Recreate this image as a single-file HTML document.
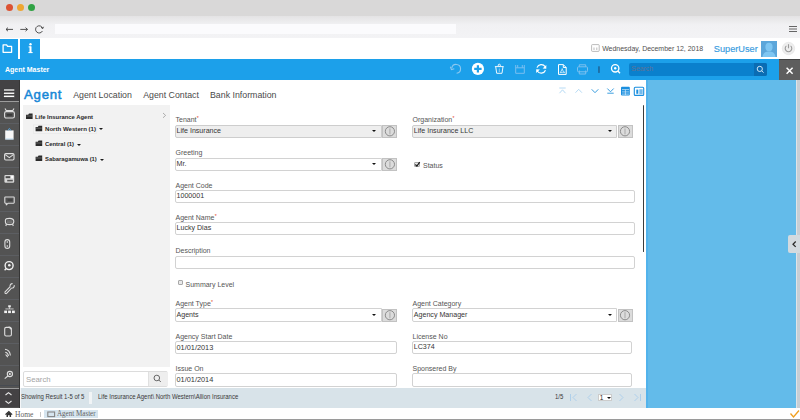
<!DOCTYPE html>
<html><head><meta charset="utf-8"><style>
*{margin:0;padding:0;box-sizing:border-box}
html,body{width:800px;height:420px;overflow:hidden;background:#fff;font-family:"Liberation Sans",sans-serif;position:relative}
.a{position:absolute}
.t{position:absolute;white-space:nowrap;line-height:1}
svg{position:absolute;overflow:visible}
.lbl{font-size:7px;color:#555555}
.val{font-size:7.1px;color:#363636}
.inp{position:absolute;border:1px solid #d2d2d2;border-radius:2px;background:#fff}
.dis{background:#eeeeee;border-color:#cdcdcd}
.ib{position:absolute;width:15px;background:#dcdcdc;border:1px solid #c2c2c2}
.req{color:#e2401c;font-size:5px;position:relative;top:-2.3px;margin-left:0.3px}
.caret{position:absolute;width:0;height:0;border-left:2px solid transparent;border-right:2px solid transparent;border-top:2.6px solid #111}
.cb{position:absolute;width:5.4px;height:5.5px;border:0.8px solid #a8a8a8;border-radius:1px;background:#e9e9e9}
.tree{font-size:6.3px;font-weight:bold;color:#262626}
</style></head><body>
<div class="a" style="left:0px;top:0px;width:800px;height:15.5px;background:#d9d8d8;"></div>
<div class="a" style="left:0px;top:15.5px;width:800px;height:22.5px;background:#f1f1f4;background:linear-gradient(#e4e3e4,#f1f1f3 40%,#f3f3f5)"></div>
<div class="a" style="left:55px;top:24px;width:401px;height:10px;background:#fbfbfd;"></div>
<div class="a" style="left:5.5px;top:3.5px;width:7px;height:7px;border-radius:50%;background:#dc5232"></div>
<div class="a" style="left:16.5px;top:3.5px;width:7px;height:7px;border-radius:50%;background:#eea632"></div>
<div class="a" style="left:27.5px;top:3.5px;width:7px;height:7px;border-radius:50%;background:#30a244"></div>
<svg style="left:0;top:0" width="800" height="40"><g stroke="#404040" stroke-width="0.9" fill="none"><path d="M6 29.4 H13 M6 29.4 L8 27.6 M6 29.4 L8 31.2"/><path d="M20.3 29.4 H27.5 M27.5 29.4 L25.5 27.6 M27.5 29.4 L25.5 31.2"/><path d="M42.6 28.3 A3.6 3.6 0 1 0 42.4 31"/><path d="M41 27.3 L42.7 28.6 L43.5 26.8"/></g><g stroke="#555" stroke-width="0.9"><path d="M789 26.5H797 M789 29H797 M789 31.5H797"/></g></svg>
<div class="a" style="left:0px;top:39px;width:17.7px;height:20.5px;background:#1ca0eb;"></div>
<div class="a" style="left:20px;top:39px;width:20px;height:20.5px;background:#1ca0eb;"></div>
<svg style="left:0;top:0" width="60" height="60"><g fill="none" stroke="#fff" stroke-width="1.3"><path d="M3.1 44.8 H6.6 L7.6 46.4 H11.6 V52.3 H3.1 Z" stroke-linejoin="round"/></g><g fill="#fff"><rect x="29.5" y="46.4" width="2" height="6.4"/><rect x="28.4" y="52" width="4.2" height="1.1"/><rect x="28.6" y="46.4" width="2.5" height="1"/><circle cx="30.5" cy="44.3" r="1.2"/></g></svg>
<svg style="left:0;top:0" width="800" height="60"><g fill="none" stroke="#aaa" stroke-width="0.8"><rect x="591.6" y="44.6" width="7.6" height="6.8" rx="0.8"/><path d="M594 47.5 V50 M596.8 47.5 V50"/></g></svg>
<div class="t" style="left:602.2px;top:46.11px;font-size:6.96px;color:#505050;font-weight:normal;">Wednesday, December 12, 2018</div>
<div class="t" style="left:713.8px;top:45.01px;font-size:9.2px;color:#379be0;font-weight:normal;-webkit-text-stroke:0.15px #379be0">SuperUser</div>
<div class="a" style="left:761px;top:41.3px;width:16px;height:15.7px;background:#5ba6da;"></div>
<svg style="left:0;top:0" width="800" height="60"><g fill="#7ec6f2"><ellipse cx="769" cy="47" rx="3.6" ry="4.2"/><path d="M762.5 57 C763 52.5 766 51.5 769 51.5 C772 51.5 775 52.5 775.5 57 Z"/></g><circle cx="788.5" cy="48.5" r="6.2" fill="#eeeeee" stroke="#e2e2e2" stroke-width="0.6"/><g fill="none" stroke="#9a9a9a" stroke-width="1.1"><path d="M786.4 45.9 A3.3 3.3 0 1 0 790.6 45.9"/><path d="M788.5 44.2 V48.3"/></g></svg>
<div class="a" style="left:0px;top:59.4px;width:800px;height:20.6px;background:#1ca0ea;"></div>
<div class="t" style="left:5px;top:65.77px;font-size:7px;color:#ffffff;font-weight:bold;">Agent Master</div>
<svg style="left:0;top:0" width="800" height="82"><g fill="none" stroke="#8cc8f0" stroke-width="1.1"><path d="M451.8 68.2 A4.4 4.4 0 1 1 456.6 73.2"/><path d="M450.3 66.8 L451.5 69.6 L454.3 68.8"/></g><circle cx="477.9" cy="68.9" r="6.1" fill="#fff"/><path d="M474.2 68.9 H481.6 M477.9 65.2 V72.6" stroke="#1ca0ea" stroke-width="2.2"/><g fill="none" stroke="#eef7fd" stroke-width="1"><path d="M494.9 66.6 H503.6"/><circle cx="499.3" cy="65.3" r="1.1"/><path d="M495.7 66.6 L496.7 73.3 H502 L503 66.6"/><path d="M499.3 68.5 V72" stroke="#8fcdf3"/></g><g fill="none" stroke="#79bff0" stroke-width="1"><path d="M515.7 65 V73.3 H524.3 V65"/><path d="M515.7 67.8 H524.3 M517.7 65 V67.8 M522.3 65 V67.8"/></g><g fill="none" stroke="#fff" stroke-width="1.2"><path d="M537 67.6 A4.6 4.6 0 0 1 545.2 66.8"/><path d="M545.5 70.3 A4.6 4.6 0 0 1 537.3 71"/></g><path d="M546.3 64.9 L546.3 68.7 L542.6 68.5 Z M536.2 73 L536.2 69.2 L539.9 69.4 Z" fill="#fff"/><g fill="none" stroke="#fff" stroke-width="1"><path d="M558.5 64.6 H563.3 L566.2 67.5 V74.4 H558.5 Z"/><path d="M563.3 64.6 V67.5 H566.2"/><path d="M560.2 72.6 C561.5 70.5 562.3 69 562.2 68.6 C562.6 70.4 563.3 71.6 564.7 72.4 C563 72.1 561.5 72.3 560.2 72.6 Z" stroke-width="0.7"/></g><g fill="none" stroke="#7cc0ef" stroke-width="1"><rect x="577.5" y="66.8" width="10" height="5" rx="1"/><path d="M579.3 66.8 V64.8 H585.7 V66.8 M579.3 70.5 V74 H585.7 V70.5"/></g><rect x="598" y="66.3" width="1.9" height="6.6" fill="#1d6ea6"/><g fill="none" stroke="#fff" stroke-width="1.3"><circle cx="615.2" cy="68.3" r="3.7"/><path d="M617.9 71 L620 73.2"/></g><circle cx="615.2" cy="68.3" r="1.2" fill="#fff"/></svg>
<div class="a" style="left:629px;top:62.8px;width:138px;height:12.8px;background:#0a80cd;border-radius:2px"></div>
<div class="t" style="left:631.3px;top:65.76px;font-size:6.9px;color:#5f7396;font-weight:normal;">Search</div>
<div class="a" style="left:753.8px;top:62.8px;width:13.2px;height:12.8px;background:#0a6cb3;border-radius:0 2px 2px 0"></div>
<svg style="left:0;top:0" width="800" height="82"><g fill="none" stroke="#cfe6f7" stroke-width="1"><circle cx="759.8" cy="68.9" r="2.6"/><path d="M761.7 70.8 L763.6 72.6"/></g></svg>
<div class="a" style="left:779px;top:59.4px;width:21px;height:20.6px;background:#5e5e5e;"></div>
<div class="a" style="left:779px;top:59.4px;width:21px;height:1px;background:#444;"></div>
<svg style="left:0;top:0" width="800" height="82"><path d="M786.6 67.7 L792.6 73.7 M792.6 67.7 L786.6 73.7" stroke="#fff" stroke-width="1.5"/></svg>
<div class="a" style="left:0px;top:80px;width:20px;height:328px;background:#535353;"></div>
<div class="a" style="left:19.3px;top:80px;width:1px;height:328px;background:#353535;"></div>
<div class="a" style="left:0px;top:80px;width:19.3px;height:21px;background:#434244;"></div>
<div class="a" style="left:0px;top:100.8px;width:19.3px;height:1.1px;background:#9c9c9c;"></div>
<div class="a" style="left:0px;top:123px;width:19.3px;height:1px;background:#5c5e62;"></div>
<div class="a" style="left:0px;top:145px;width:19.3px;height:1px;background:#5c5e62;"></div>
<div class="a" style="left:0px;top:167px;width:19.3px;height:1px;background:#5c5e62;"></div>
<div class="a" style="left:0px;top:189px;width:19.3px;height:1px;background:#5c5e62;"></div>
<div class="a" style="left:0px;top:211px;width:19.3px;height:1px;background:#5c5e62;"></div>
<div class="a" style="left:0px;top:233px;width:19.3px;height:1px;background:#5c5e62;"></div>
<div class="a" style="left:0px;top:255px;width:19.3px;height:1px;background:#5c5e62;"></div>
<div class="a" style="left:0px;top:277px;width:19.3px;height:1px;background:#5c5e62;"></div>
<div class="a" style="left:0px;top:299px;width:19.3px;height:1px;background:#5c5e62;"></div>
<div class="a" style="left:0px;top:321px;width:19.3px;height:1px;background:#5c5e62;"></div>
<div class="a" style="left:0px;top:343px;width:19.3px;height:1px;background:#5c5e62;"></div>
<div class="a" style="left:0px;top:365px;width:19.3px;height:1px;background:#5c5e62;"></div>
<div class="a" style="left:0px;top:384.5px;width:19.3px;height:0.8px;background:#474b52;"></div>
<div class="a" style="left:0px;top:387.9px;width:19.3px;height:1px;background:#9a9a9a;"></div>
<div class="a" style="left:0px;top:388.9px;width:19.3px;height:18px;background:#444244;"></div>
<svg style="left:0;top:0" width="20" height="420"><g fill="#fff" stroke="#222" stroke-width="0.3"><rect x="3.8" y="89.1" width="10.6" height="1.8"/><rect x="3.8" y="92.3" width="10.6" height="1.8"/><rect x="3.8" y="95.4" width="10.6" height="1.8"/></g><g fill="none" stroke="#dedede" stroke-width="1.1" stroke-linejoin="round"><rect x="4.6" y="111.6" width="9.8" height="6.4" rx="1.6"/><path d="M5 108.4 L6.2 110.6 H12.8 L14 108.4"/><rect x="4.6" y="153.6" width="9.4" height="6.4" rx="1.2"/><path d="M5.2 154.6 L9.3 157.6 L13.4 154.6"/><path d="M5.4 197 H13.6 Q14.2 197 14.2 197.6 V202.6 Q14.2 203.2 13.6 203.2 H8.2 L6.3 204.8 V203.2 H5.4 Q4.8 203.2 4.8 202.6 V197.6 Q4.8 197 5.4 197 Z"/><path d="M5.4 220.3 Q5.4 218.4 9.6 218.4 Q13.8 218.4 13.8 221.5 Q13.8 224.6 9.6 224.6 Q5.4 224.6 5.4 222 Z"/><path d="M6.5 224 L5.8 226 M12.5 224 L13.3 226"/><rect x="4.9" y="239.6" width="4.8" height="8.8" rx="2.4"/><circle cx="9.1" cy="265.6" r="4" stroke="#f0f0f0" stroke-width="1.4"/><path d="M6.3 268.6 L4.6 270.2" stroke="#f0f0f0" stroke-width="1.4"/><path d="M4.8 292.2 L10.2 286.6 M6.4 293.6 L11.6 288 M4.8 292.2 Q4.8 293.6 6.4 293.6" /><path d="M10.2 286.6 A2.3 2.3 0 0 1 12.6 283.6 M11.6 288 A2.3 2.3 0 0 0 14.2 285.2"/><path d="M4.7 328.8 Q4.7 327.4 6.2 327.4 H9.3 L11.4 329.5 V334.6 Q11.4 336 10 336 H6.2 Q4.7 336 4.7 334.6 Z"/><path d="M8.5 327.2 A2.4 2.4 0 0 1 11.6 329.2"/><path d="M5 349.3 Q9.8 350 10.4 355.5 M5.3 352.3 Q8.2 353 8.4 356 M5.6 354.5 L7.8 357.2"/><circle cx="9.9" cy="374" r="2.6"/><path d="M7.9 376 L4.7 378.6"/><path d="M5.5 395 L8.5 392.6 L11.5 395 M5.5 401 L8.5 403.4 L11.5 401" stroke="#e8e8e8"/></g><g fill="#eeeeee"><circle cx="7.3" cy="242" r="0.8"/><circle cx="7.3" cy="246" r="0.8"/><circle cx="9.3" cy="265.3" r="1.3"/><circle cx="9.9" cy="374" r="1"/></g><rect x="6.8" y="114.2" width="5.4" height="1.4" fill="#333"/><path d="M5.2 130.4 H13.6 V139.6 H5.2 Z" fill="#f7f7f7"/><path d="M7.8 130.6 L9.4 128.4 L11 130.6" stroke="#5aa6dc" stroke-width="0.9" fill="none"/><path d="M5.4 139 H13.4" stroke="#8fc3ea" stroke-width="0.6"/><rect x="4.4" y="174.9" width="9.8" height="7.8" rx="1.2" fill="#d8d8d8"/><rect x="5.6" y="176.2" width="4.6" height="2" fill="#4a4a4a"/><rect x="11.2" y="175.9" width="2" height="2.4" fill="#fff"/><rect x="7.2" y="179.8" width="5.6" height="1.6" fill="#555"/><rect x="7.6" y="199.4" width="5" height="1.3" fill="#3a3a3a"/><rect x="6.8" y="220.6" width="5.6" height="0.9" fill="#8a8a8a"/><rect x="6.8" y="222.4" width="5.6" height="0.9" fill="#8a8a8a"/><g fill="#f2f2f2"><rect x="8.2" y="305.3" width="2.6" height="2"/><rect x="4.2" y="310.6" width="2.8" height="2.5"/><rect x="8.1" y="310.6" width="2.8" height="2.5"/><rect x="12" y="310.6" width="2.8" height="2.5"/><rect x="5.4" y="308.6" width="8.2" height="0.7"/><rect x="9.15" y="307.2" width="0.7" height="1.6"/></g></svg>
<div class="t" style="left:24px;top:88.13px;font-size:13.2px;color:#1787d6;font-weight:normal;letter-spacing:0.75px;-webkit-text-stroke:0.5px #1787d6">Agent</div>
<div class="t" style="left:73.2px;top:90.85px;font-size:8.8px;color:#4a4a4a;font-weight:normal;">Agent Location</div>
<div class="t" style="left:143.2px;top:90.85px;font-size:8.8px;color:#4a4a4a;font-weight:normal;">Agent Contact</div>
<div class="t" style="left:210px;top:90.85px;font-size:8.8px;color:#4a4a4a;font-weight:normal;">Bank Information</div>
<svg style="left:0;top:0" width="800" height="110"><g fill="none" stroke="#aed6f3" stroke-width="0.9"><path d="M559.3 88 H565.7 M559.5 93.2 L562.5 89.8 L565.5 93.2"/><path d="M575.5 92.7 L578.7 89.3 L581.9 92.7"/></g><g fill="none" stroke="#3a9ee0" stroke-width="1"><path d="M591.7 89.3 L595 92.7 L598.3 89.3"/><path d="M607.3 88.5 L610.5 91.8 L613.7 88.5 M607.3 93.2 H613.7"/></g><rect x="621" y="86.8" width="8.8" height="8.8" rx="1" fill="#1b8fdf"/><g stroke="#d7ecfb" stroke-width="0.7"><path d="M622 89.6 H629 M622 91.9 H629 M622 94.1 H629 M625.4 89.6 V95"/></g><rect x="634.3" y="87.2" width="9.4" height="8.2" rx="1" fill="none" stroke="#1b8fdf" stroke-width="1.1"/><g fill="#1b8fdf"><rect x="636.3" y="89.6" width="2" height="4.2"/><rect x="639.6" y="89.2" width="1" height="5"/><rect x="641.4" y="89.2" width="1" height="5"/></g></svg>
<div class="a" style="left:23px;top:105px;width:147px;height:262.4px;background:#f2f2f2;"></div>
<svg style="left:0;top:0" width="180" height="170"><path d="M163 113 L165.6 115.4 L163 117.8" stroke="#9b9b9b" stroke-width="0.8" fill="none"/><rect x="33.3" y="124.9" width="63.5" height="8.6" fill="#f3f3f3" stroke="#e4e4e4" stroke-width="0.5"/></svg>
<svg style="left:0;top:0" width="180" height="170"><g fill="#2a2a2a"><path d="M26 114.8 H28.2 L29 113.6 H32.6 V119.0 H26 Z"/></g><path d="M26.4 116.0 H32.2" stroke="#9a9a9a" stroke-width="0.5"/></svg>
<div class="t" style="left:35px;top:113.94px;font-size:6.1px;color:#262626;font-weight:bold;transform:scaleX(0.965);transform-origin:0 0;">Life Insurance Agent</div>
<svg style="left:0;top:0" width="180" height="170"><g fill="#2a2a2a"><path d="M35.6 127.0 H37.800000000000004 L38.6 125.8 H42.2 V131.2 H35.6 Z"/></g><path d="M36.0 128.2 H41.800000000000004" stroke="#9a9a9a" stroke-width="0.5"/></svg>
<div class="t" style="left:45px;top:126.34px;font-size:6.1px;color:#262626;font-weight:bold;">North Western (1)</div>
<svg style="left:0;top:0" width="180" height="170"><g fill="#2a2a2a"><path d="M35.6 141.79999999999998 H37.800000000000004 L38.6 140.6 H42.2 V146.0 H35.6 Z"/></g><path d="M36.0 143.0 H41.800000000000004" stroke="#9a9a9a" stroke-width="0.5"/></svg>
<div class="t" style="left:45px;top:141.44px;font-size:6.1px;color:#262626;font-weight:bold;transform:scaleX(0.965);transform-origin:0 0;">Central (1)</div>
<svg style="left:0;top:0" width="180" height="170"><g fill="#2a2a2a"><path d="M35.6 156.79999999999998 H37.800000000000004 L38.6 155.6 H42.2 V161.0 H35.6 Z"/></g><path d="M36.0 158.0 H41.800000000000004" stroke="#9a9a9a" stroke-width="0.5"/></svg>
<div class="t" style="left:45px;top:156.44px;font-size:6.1px;color:#262626;font-weight:bold;transform:scaleX(0.962);transform-origin:0 0;">Sabaragamuwa (1)</div>
<div class="caret" style="left:98.7px;top:128.29999999999998px;border-left-width:2.3px;border-right-width:2.3px;border-top-width:2.7px;border-top-color:#1a1a1a"></div>
<div class="caret" style="left:77.4px;top:144.2px;border-left-width:2.3px;border-right-width:2.3px;border-top-width:2.7px;border-top-color:#1a1a1a"></div>
<div class="caret" style="left:100.4px;top:158.89999999999998px;border-left-width:2.3px;border-right-width:2.3px;border-top-width:2.7px;border-top-color:#1a1a1a"></div>
<div class="a" style="left:23px;top:370.6px;width:145px;height:16.5px;border:1px solid #dcdcdc;border-radius:2px;background:#fff"></div>
<div class="a" style="left:148px;top:371.5px;width:19.5px;height:14.8px;background:#eeeeee;border-left:1px solid #e0e0e0"></div>
<div class="t" style="left:26px;top:375.70px;font-size:7.8px;color:#a5a5a5;font-weight:normal;">Search</div>
<svg style="left:0;top:0" width="180" height="400"><g fill="none" stroke="#666" stroke-width="1"><circle cx="156.8" cy="378" r="2.8"/><path d="M158.8 380 L160.8 382"/></g></svg>
<div class="t lbl" style="left:175.5px;top:116.37px">Tenant<span class="req">*</span></div>
<div class="inp dis" style="left:175px;top:124.5px;width:207.4px;height:13.4px;border-radius:2px 0 0 2px;"></div>
<div class="t val" style="left:176.5px;top:127.69px;font-size:7.1px">Life Insurance</div>
<div class="caret" style="left:372.4px;top:130.0px"></div>
<div class="ib" style="left:382.4px;top:124.8px;height:13.1px"></div>
<svg style="left:0;top:0" width="800" height="420"><circle cx="389.9" cy="131.3" r="4.6" fill="none" stroke="#8c8c8c" stroke-width="1"/><path d="M389.9 128.8 V133.8" stroke="#b4b4b4" stroke-width="1.3" stroke-linecap="round"/></svg>
<div class="t lbl" style="left:412.5px;top:116.37px">Organization<span class="req">*</span></div>
<div class="inp dis" style="left:412.3px;top:124.5px;width:205.2px;height:13.4px;border-radius:2px 0 0 2px;"></div>
<div class="t val" style="left:413.8px;top:127.69px;font-size:7.1px">Life Insurance LLC</div>
<div class="caret" style="left:607.5px;top:130.0px"></div>
<div class="ib" style="left:617.5px;top:124.8px;height:13.1px"></div>
<svg style="left:0;top:0" width="800" height="420"><circle cx="625.0" cy="131.3" r="4.6" fill="none" stroke="#8c8c8c" stroke-width="1"/><path d="M625.0 128.8 V133.8" stroke="#b4b4b4" stroke-width="1.3" stroke-linecap="round"/></svg>
<div class="t lbl" style="left:175.5px;top:149.07px">Greeting</div>
<div class="inp" style="left:175px;top:157.5px;width:207.4px;height:13.4px;border-radius:2px 0 0 2px;"></div>
<div class="t val" style="left:176.5px;top:160.69px;font-size:7.1px">Mr.</div>
<div class="caret" style="left:372.4px;top:163.0px"></div>
<div class="ib" style="left:382.4px;top:157.8px;height:13.1px"></div>
<svg style="left:0;top:0" width="800" height="420"><circle cx="389.9" cy="164.3" r="4.6" fill="none" stroke="#8c8c8c" stroke-width="1"/><path d="M389.9 161.8 V166.8" stroke="#b4b4b4" stroke-width="1.3" stroke-linecap="round"/></svg>
<div class="cb" style="left:414.4px;top:161.8px"></div>
<svg style="left:0;top:0" width="800" height="420"><path d="M415.4 164.5 L416.9 166.1 L419.7 162.2" stroke="#161616" stroke-width="1.2" fill="none"/></svg>
<div class="t lbl" style="left:423px;top:161.97px">Status</div>
<div class="t lbl" style="left:175.5px;top:181.87px">Agent Code</div>
<div class="inp" style="left:175px;top:189.7px;width:460px;height:13.4px;"></div>
<div class="t val" style="left:176.5px;top:192.89px;font-size:7.1px">1000001</div>
<div class="t lbl" style="left:175.5px;top:214.27px">Agent Name<span class="req">*</span></div>
<div class="inp" style="left:175px;top:222.1px;width:460px;height:13.4px;"></div>
<div class="t val" style="left:176.5px;top:225.29px;font-size:7.1px">Lucky Dias</div>
<div class="t lbl" style="left:175.5px;top:246.67px">Description</div>
<div class="inp" style="left:175px;top:255.5px;width:460px;height:13.4px;"></div>
<div class="cb" style="left:177.5px;top:279.9px"></div>
<div class="t lbl" style="left:185.5px;top:280.57px">Summary Level</div>
<div class="t lbl" style="left:175.5px;top:300.37px">Agent Type<span class="req">*</span></div>
<div class="inp" style="left:175px;top:308.4px;width:207.4px;height:13.4px;border-radius:2px 0 0 2px;"></div>
<div class="t val" style="left:176.5px;top:311.59px;font-size:7.1px">Agents</div>
<div class="caret" style="left:372.4px;top:313.9px"></div>
<div class="ib" style="left:382.4px;top:308.7px;height:13.1px"></div>
<svg style="left:0;top:0" width="800" height="420"><circle cx="389.9" cy="315.2" r="4.6" fill="none" stroke="#8c8c8c" stroke-width="1"/><path d="M389.9 312.7 V317.7" stroke="#b4b4b4" stroke-width="1.3" stroke-linecap="round"/></svg>
<div class="t lbl" style="left:412.5px;top:300.37px">Agent Category</div>
<div class="inp" style="left:412.3px;top:308.4px;width:205.2px;height:13.4px;border-radius:2px 0 0 2px;"></div>
<div class="t val" style="left:413.8px;top:311.59px;font-size:7.1px">Agency Manager</div>
<div class="caret" style="left:607.5px;top:313.9px"></div>
<div class="ib" style="left:617.5px;top:308.7px;height:13.1px"></div>
<svg style="left:0;top:0" width="800" height="420"><circle cx="625.0" cy="315.2" r="4.6" fill="none" stroke="#8c8c8c" stroke-width="1"/><path d="M625.0 312.7 V317.7" stroke="#b4b4b4" stroke-width="1.3" stroke-linecap="round"/></svg>
<div class="t lbl" style="left:175.5px;top:332.77px">Agency Start Date</div>
<div class="inp" style="left:175px;top:340.8px;width:222.4px;height:13.4px;"></div>
<div class="t val" style="left:176.5px;top:343.78px;font-size:7.35px">01/01/2013</div>
<div class="t lbl" style="left:412.5px;top:332.77px">License No</div>
<div class="inp" style="left:412.3px;top:340.8px;width:220.2px;height:13.4px;"></div>
<div class="t val" style="left:413.8px;top:343.99px;font-size:7.1px">LC374</div>
<div class="t lbl" style="left:175.5px;top:364.87px">Issue On</div>
<div class="inp" style="left:175px;top:373.3px;width:222.4px;height:13.4px;"></div>
<div class="t val" style="left:176.5px;top:376.28px;font-size:7.35px">01/01/2014</div>
<div class="t lbl" style="left:412.5px;top:364.87px">Sponsered By</div>
<div class="inp" style="left:412.3px;top:373.3px;width:220.2px;height:13.4px;"></div>
<div class="a" style="left:642.7px;top:105.4px;width:1.5px;height:146.5px;background:#3c3c3c;border-radius:1px"></div>
<div class="a" style="left:646px;top:80px;width:150px;height:328px;background:#63bbea;"></div>
<div class="a" style="left:646px;top:80px;width:1.6px;height:328px;background:#52b3ec;"></div>
<div class="a" style="left:796px;top:80px;width:4px;height:328px;background:#c8ced4;"></div>
<div class="a" style="left:796px;top:80px;width:1px;height:328px;background:#dfe4e8;"></div>
<div class="a" style="left:788px;top:235px;width:12px;height:18.3px;background:#d3dadf;border-radius:2px 0 0 2px"></div>
<svg style="left:0;top:0" width="800" height="420"><path d="M795.7 241.5 L793 244.2 L795.7 246.9" stroke="#2a2a2a" stroke-width="1.25" fill="none"/></svg>
<div class="a" style="left:20px;top:387.7px;width:626px;height:20.3px;background:#d8e3e9;"></div>
<div class="t" style="left:20.6px;top:394.41px;font-size:6.6px;color:#383838;font-weight:normal;transform:scaleX(0.905);transform-origin:0 0;">Showing Result 1-5 of 5</div>
<div class="a" style="left:89.2px;top:392px;width:2.6px;height:11.5px;background:#f1f4f6;"></div>
<div class="a" style="left:20px;top:388px;width:1.2px;height:20px;background:#f4f6f8;"></div>
<div class="t" style="left:97.5px;top:394.41px;font-size:6.6px;color:#383838;font-weight:normal;transform:scaleX(0.905);transform-origin:0 0;">Life Insurance Agent\ North Western\Allion Insurance</div>
<div class="t" style="left:555px;top:394.41px;font-size:6.6px;color:#383838;font-weight:normal;transform:scaleX(0.905);transform-origin:0 0;">1/5</div>
<svg style="left:0;top:0" width="800" height="420"><g fill="none" stroke="#a9cdea" stroke-width="0.9"><path d="M570.5 394 V401 M576.5 394 L573 397.5 L576.5 401"/><path d="M591.5 394 L588 397.5 L591.5 401"/><path d="M619.5 394 L623 397.5 L619.5 401"/><path d="M634.5 394 L638 397.5 L634.5 401 M640.5 394 V401"/></g></svg>
<div class="a" style="left:598.4px;top:394.3px;width:13.6px;height:7px;background:#fff;border:0.5px solid #ccc"></div>
<div class="t" style="left:599.8px;top:395.00px;font-size:6.5px;color:#222;font-weight:normal;">1</div>
<div class="caret" style="left:606.5px;top:396.6px;border-left-width:2px;border-right-width:2px;border-top-width:2.5px"></div>
<div class="a" style="left:0px;top:408px;width:800px;height:11px;background:#ffffff;"></div>
<div class="a" style="left:0px;top:418.9px;width:800px;height:1.1px;background:#9a9a9a;"></div>
<svg style="left:0;top:0" width="800" height="420"><path d="M5 414.3 L8.8 410.8 L12.6 414.3 L11.6 415 L8.8 412.5 L6 415 Z" fill="#333"/><path d="M6.5 414 L8.8 412 L11.1 414 V417.1 H9.6 V415.3 H8 V417.1 H6.5 Z" fill="#333"/></svg>
<div class="t" style="left:15px;top:410.55px;font-size:7.5px;color:#626262;font-weight:normal;font-family:'Liberation Serif',serif;">Home</div>
<div class="a" style="left:39.5px;top:411.8px;width:1px;height:5.6px;background:#c8c8c8;"></div>
<div class="a" style="left:43.8px;top:409.9px;width:54.7px;height:7.9px;background:#d6e5ef;"></div>
<svg style="left:0;top:0" width="800" height="420"><rect x="47.8" y="412" width="6.8" height="4.6" fill="none" stroke="#858585" stroke-width="1.1"/></svg>
<div class="t" style="left:57px;top:410.35px;font-size:7.5px;color:#636363;font-weight:normal;font-family:'Liberation Serif',serif;transform:scaleX(0.94);transform-origin:0 0;">Agent Master</div>
<svg style="left:0;top:0" width="800" height="420"><path d="M790.5 413.5 L793.5 417 L799 410.5" stroke="#f0a020" stroke-width="1.3" fill="none"/></svg>
</body></html>
